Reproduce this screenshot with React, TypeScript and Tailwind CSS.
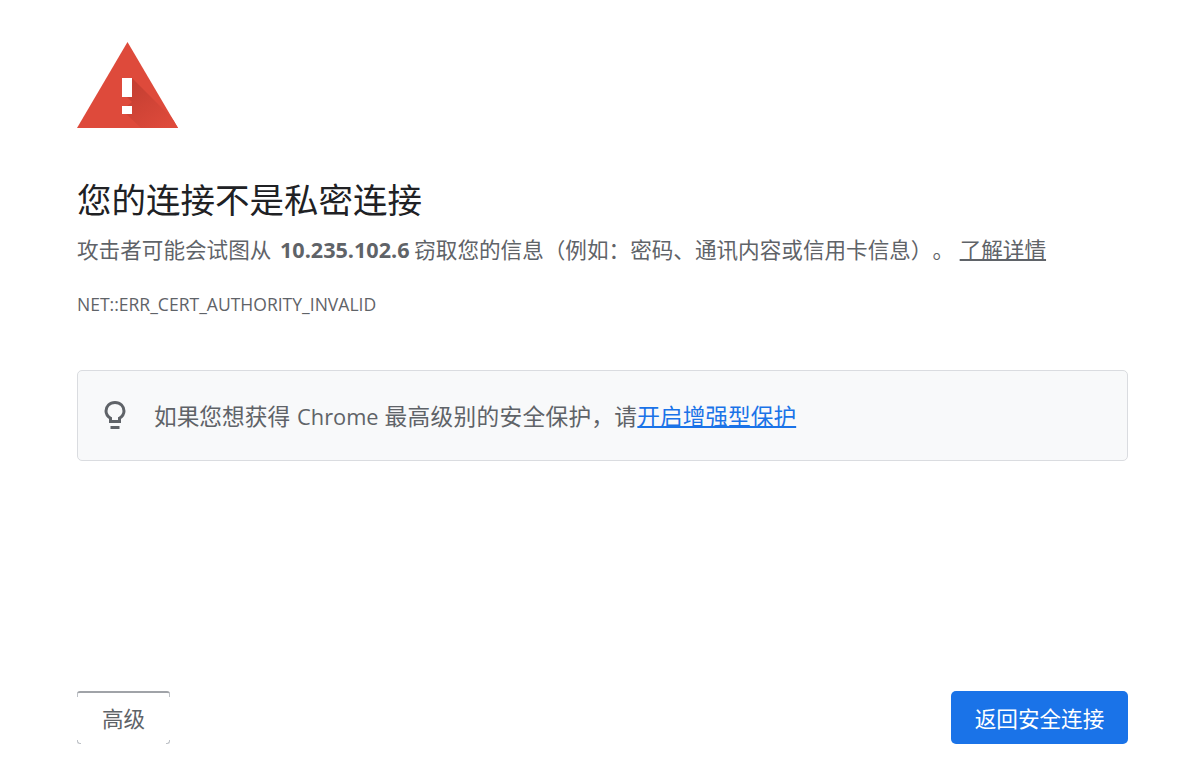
import * as React from 'react';

const fontClass = "font-['Open_Sans','Noto_Sans_CJK_SC',sans-serif]";

function WarningIcon() {
  return (
    <svg width="101" height="86" viewBox="0 0 101 86" className="block">
      <defs>
        <clipPath id="tri">
          <path d="M50.500 0 L101 86 L0 86 Z" />
        </clipPath>
        <linearGradient id="shade" x1="0.250" y1="0.100" x2="0.900" y2="0.900">
          <stop offset="0" stopColor="#c53f32" />
          <stop offset="1" stopColor="#de4a3b" />
        </linearGradient>
      </defs>
      <path d="M50.500 0 L101 86 L0 86 Z" fill="#de4a3b" />
      <g clipPath="url(#tri)">
        <path d="M55 36 L101 82 L101 86 L64 86 L45 68 L55 60 L45 50 Z" fill="url(#shade)" />
      </g>
      <rect x="45" y="36" width="10" height="19" fill="#ffffff" />
      <rect x="45" y="64" width="10" height="8" fill="#ffffff" />
    </svg>
  );
}

function BulbIcon() {
  return (
    <svg width="22" height="30" viewBox="0 0 22 30" fill="none" className="block">
      <path
        d="M11 1.500 C5.500 1.500 2 5.400 2 10 C2 13.300 3.800 15.500 6.500 17.200 L6.500 20.500 L15.500 20.500 L15.500 17.200 C18.200 15.500 20 13.300 20 10 C20 5.400 16.500 1.500 11 1.500 Z"
        stroke="#5f6368"
        strokeWidth="3"
      />
      <rect x="6.500" y="25" width="9" height="3" fill="#5f6368" />
    </svg>
  );
}

function Corner({ className }: { className: string }) {
  return <span className={`absolute w-[4px] h-[4px] border-[#bdc1c6] ${className}`} />;
}

export default function App() {
  return (
    <div className={`${fontClass} min-h-[771px] bg-white flex flex-col pl-[77px] pr-[61px] pt-[42px] pb-[27px]`}>
      <WarningIcon />

      <h1 className="mt-[49px] text-[34.5px] leading-[46px] font-normal text-[#202124]">您的连接不是私密连接</h1>

      <p className="mt-[12px] text-[21.6px] leading-[30px] text-[#5f6368] [text-spacing-trim:space-all]">
        攻击者可能会试图从 <strong className="ml-[3px] -mr-[1px] font-bold">10.235.102.6</strong> 窃取您的信息（例如：密码、通讯内容或信用卡信息）。{' '}
        <a href="#" className="text-[#5f6368] underline decoration-2">了解详情</a>
      </p>

      <div className="mt-[27px] text-[17.55px] leading-[24px] text-[#5f6368] uppercase">NET::ERR_CERT_AUTHORITY_INVALID</div>

      <div className="mt-[54px] h-[91px] flex items-center gap-[28px] pl-[26px] bg-[#f8f9fa] border border-[#dadce0] rounded-[5px]">
        <BulbIcon />
        <div className="pt-[2px] text-[22.7px] leading-[30px] text-[#5f6368] [text-spacing-trim:space-all]">
          如果您想获得 <span className="ml-[1px] text-[21.8px]">Chrome</span> <span className="tracking-[0.3px]">最高级别的安全保护，请</span><a href="#" className="text-[#1a73e8] underline decoration-2">开启增强型保护</a>
        </div>
      </div>

      <div className="mt-auto flex items-start justify-between">
        <button className="relative w-[93px] h-[53px] pt-[2px] bg-white border-t-2 border-[#a0a3a8] rounded-t-[3px] text-[21.6px] text-[#5f6368]">
          高级
          <Corner className="left-0 bottom-0 border-l border-b rounded-bl-[3px]" />
          <Corner className="right-0 bottom-0 border-r border-b rounded-br-[3px]" />
          <Corner className="left-0 top-0 border-l" />
          <Corner className="right-0 top-0 border-r" />
        </button>
        <button className="w-[177px] h-[53px] pt-[4px] bg-[#1a73e8] rounded-[5px] text-[21.6px] text-white">返回安全连接</button>
      </div>
    </div>
  );
}
